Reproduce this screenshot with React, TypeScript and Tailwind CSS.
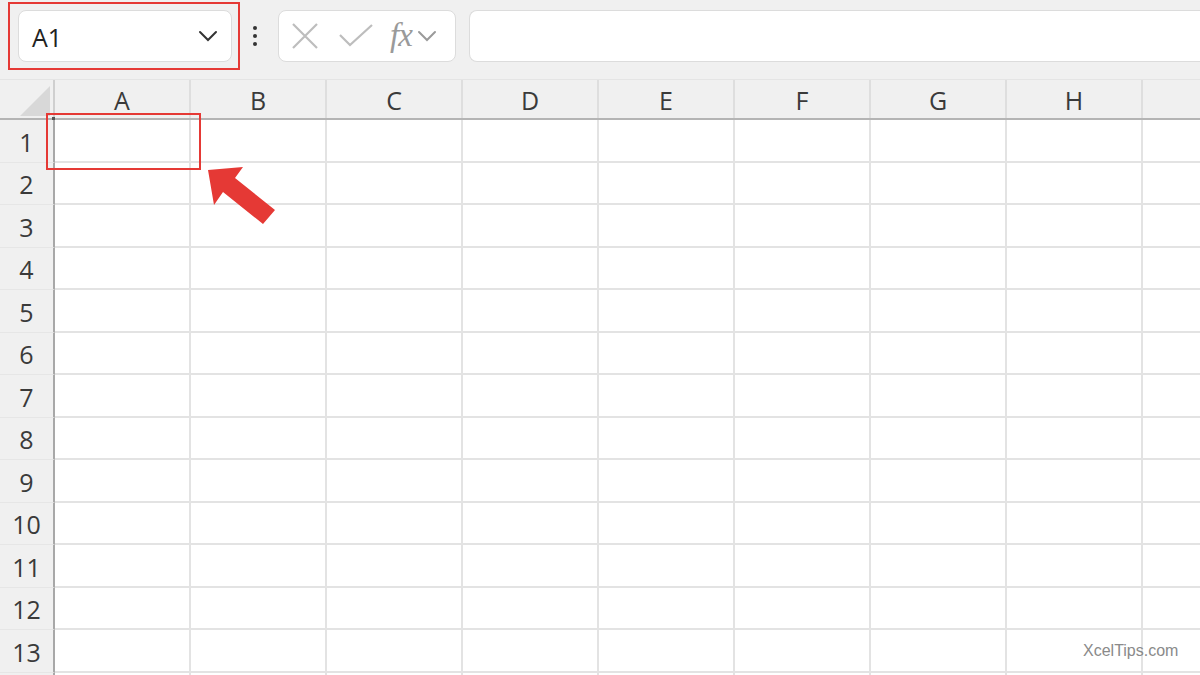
import React from "react";

const cols = ["A", "B", "C", "D", "E", "F", "G", "H", ""];
const rows = Array.from({ length: 14 }, (_, i) => i + 1);

export default function App() {
  return (
    <div
      className="relative w-[1200px] h-[675px] overflow-hidden bg-white"
      style={{ fontFamily: '"Open Sans", "Noto Sans", sans-serif' }}
    >
      {/* Top bar */}
      <div className="flex items-start h-[80px] bg-[#f0f0f0] pt-[10px] border-b border-[#e4e4e4]">
        <div className="relative ml-[18px] w-[214px] h-[52px] bg-white rounded-[8px] border border-[#dcdcdc] flex items-center pl-[13px] pr-[12px]">
          <span className="text-[25px] text-[#222] leading-none pt-[2px]">A1</span>
          <svg className="ml-auto" width="22" height="22" viewBox="0 0 22 22">
            <path d="M3 7 L11 15 L19 7" fill="none" stroke="#333" strokeWidth="2" strokeLinecap="round" />
          </svg>
          <div className="absolute left-[-11px] top-[-9px] right-[-9px] bottom-[-9px] border-2 border-[#e53935]" />
        </div>
        <div className="w-[46px] h-[52px] flex flex-col items-center justify-center gap-[4px]">
          <div className="w-[4px] h-[4px] rounded-full bg-[#333]" />
          <div className="w-[4px] h-[4px] rounded-full bg-[#333]" />
          <div className="w-[4px] h-[4px] rounded-full bg-[#333]" />
        </div>
        <div className="w-[178px] h-[52px] bg-white rounded-[8px] border border-[#dcdcdc] flex items-center">
          <svg className="ml-[11px]" width="30" height="30" viewBox="0 0 30 30">
            <path d="M3 3 L27 27 M27 3 L3 27" stroke="#bdbdbd" strokeWidth="2.2" />
          </svg>
          <svg className="ml-[18px]" width="36" height="30" viewBox="0 0 36 30">
            <path d="M2 14 L12 24 L34 4" fill="none" stroke="#bdbdbd" strokeWidth="2.2" />
          </svg>
          <span
            className="ml-[16px] text-[33px] italic text-[#9a9a9a] leading-none tracking-[-1px] pb-[2px]"
            style={{ fontFamily: '"Liberation Serif", "DejaVu Serif", serif' }}
          >
            fx
          </span>
          <svg className="ml-[4px]" width="22" height="22" viewBox="0 0 22 22">
            <path d="M3 7 L11 15 L19 7" fill="none" stroke="#9a9a9a" strokeWidth="2" strokeLinecap="round" />
          </svg>
        </div>
        <div className="ml-[13px] flex-1 h-[52px] bg-white rounded-l-[8px] border border-r-0 border-[#dcdcdc]" />
      </div>

      {/* Column header row */}
      <div className="flex h-[40px] bg-[#f0f0f0] border-b-2 border-[#b4b4b4]">
        <div className="relative w-[55px] shrink-0 border-r-2 border-[#cfcfcf]">
          <svg className="absolute left-[20px] top-[6px]" width="30" height="30" viewBox="0 0 30 30">
            <path d="M30 0 L30 30 L0 30 Z" fill="#d8d8d8" />
          </svg>
        </div>
        {cols.map((c, i) => (
          <div
            key={i}
            className="w-[136px] shrink-0 flex items-center justify-center border-r-2 border-[#dedede] text-[25px] text-[#3a3a3a] leading-none pt-[2px]"
          >
            {c}
          </div>
        ))}
      </div>

      {/* Rows */}
      <div className="flex flex-col">
        {rows.map((r) => (
          <div key={r} className="flex h-[42.5px] shrink-0">
            <div className="w-[55px] shrink-0 bg-[#f0f0f0] border-r-2 border-[#a8a8a8] border-b border-b-[#e6e6e6] flex items-center justify-center text-[25px] text-[#3a3a3a] leading-none pt-[3px]">
              {r <= 13 ? r : ""}
            </div>
            {cols.map((_, i) => (
              <div key={i} className="w-[136px] shrink-0 border-r-2 border-b-2 border-[#e3e3e3]" />
            ))}
          </div>
        ))}
      </div>

      {/* Selection annotation on A1 */}
      <div className="absolute left-[46px] top-[113px] w-[155px] h-[57px] border-2 border-[#e53935]" />
      <div className="absolute left-[52px] top-[117px] w-[3px] h-[3px] bg-[#555]" />

      {/* Red arrow */}
      <svg className="absolute left-[200px] top-[160px]" width="90" height="75" viewBox="0 0 90 75">
        <path d="M8 10 L43 7 L35 18 L75 50 L63 64 L23 32 L14 45 Z" fill="#e53935" />
      </svg>

      {/* Watermark */}
      <div
        className="absolute left-[1083px] top-[643px] text-[16px] text-[#8a8a8a] leading-none"
        style={{ fontFamily: '"Liberation Sans", Arial, sans-serif' }}
      >
        XcelTips.com
      </div>
    </div>
  );
}
